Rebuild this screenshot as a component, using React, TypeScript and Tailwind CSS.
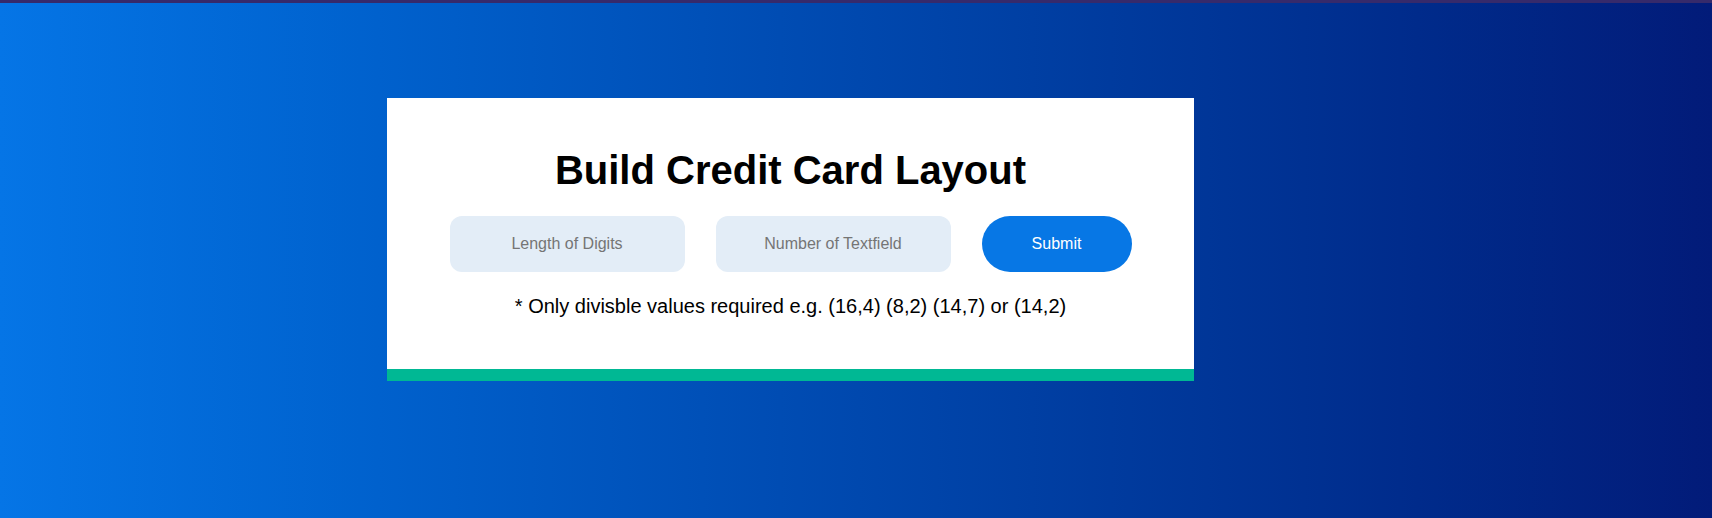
import { useState } from "react";

export default function App() {
  const [digits, setDigits] = useState("");
  const [fields, setFields] = useState("");

  return (
    <div className="min-h-screen flex flex-col font-['Liberation_Sans',Arial,sans-serif]">
      <div className="h-[3px] bg-[#362a6b]" />
      <div className="flex-1 bg-gradient-to-r from-[#0575E6] to-[#021B79] pl-[387px] pt-[95px]">
        <div className="w-[807px] bg-white flex flex-col items-center pt-[52px]">
          <h1 className="text-[40px] leading-[40px] font-bold text-black">Build Credit Card Layout</h1>
          <form
            className="flex flex-row gap-[31px] mt-[26px]"
            onSubmit={(e) => e.preventDefault()}
          >
            <input
              className="w-[235px] h-[56px] rounded-[12px] bg-[#e3edf7] text-center text-base text-black placeholder:text-[#757575] outline-none"
              placeholder="Length of Digits"
              value={digits}
              onChange={(e) => setDigits(e.target.value)}
            />
            <input
              className="w-[235px] h-[56px] rounded-[12px] bg-[#e3edf7] text-center text-base text-black placeholder:text-[#757575] outline-none"
              placeholder="Number of Textfield"
              value={fields}
              onChange={(e) => setFields(e.target.value)}
            />
            <button
              type="submit"
              className="w-[150px] h-[56px] rounded-full bg-[#0777e5] text-white text-base"
            >
              Submit
            </button>
          </form>
          <p className="text-[20px] leading-[28px] text-black mt-[20px]">
            * Only divisble values required e.g. (16,4) (8,2) (14,7) or (14,2)
          </p>
          <div className="h-[49px]" />
          <div className="w-full h-[12px] bg-[#00b894]" />
        </div>
      </div>
    </div>
  );
}
